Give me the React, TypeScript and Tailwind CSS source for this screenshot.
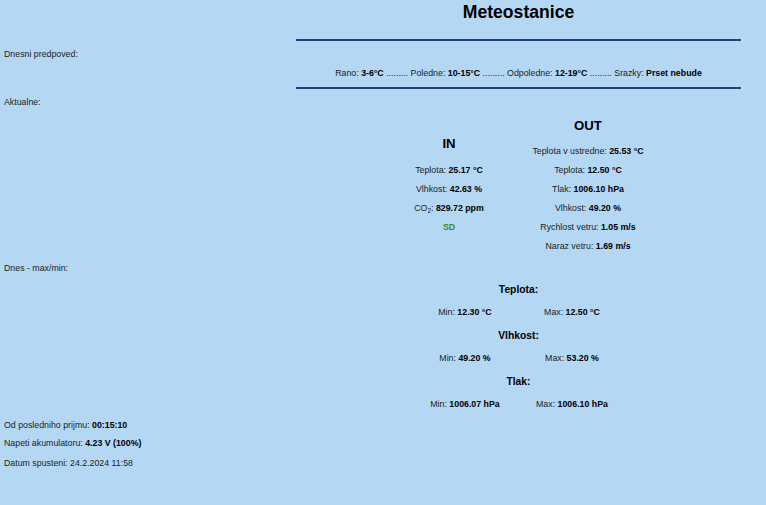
export default function App() {
  return (
    <div className="min-h-[505px] w-[766px] bg-[#b4d7f4] font-['Liberation_Sans',Arial,sans-serif] text-[8.8px] leading-[12px] text-[#222]">
      {/* header */}
      <Row>
        <div />
        <div>
          <h1 className="h-[39px] pt-[2px] text-center text-[17.6px] font-bold leading-[20px] text-black">
            Meteostanice
          </h1>
          <Rule />
        </div>
      </Row>

      {/* forecast */}
      <Row>
        <div className="mt-[7px]">Dnesni predpoved:</div>
        <div>
          <p className="mt-[26px] mb-[8px] text-center">
            Rano: <b className="text-black">3-6°C</b> ......... Poledne:{" "}
            <b className="text-black">10-15°C</b> ......... Odpoledne:{" "}
            <b className="text-black">12-19°C</b> ......... Srazky:{" "}
            <b className="text-black">Prset nebude</b>
          </p>
          <Rule />
        </div>
      </Row>

      {/* current */}
      <Row>
        <div className="mt-[7px]">Aktualne:</div>
        <div className="mt-[29px] grid grid-cols-[139px_139px] items-center justify-center text-center">
          <div>
            <h2 className="mb-[9px] text-[13.2px] font-bold leading-[16px] text-black">IN</h2>
            <Val label="Teplota" value="25.17 °C" />
            <Val label="Vlhkost" value="42.63 %" />
            <div className="h-[19px] leading-[19px]">
              CO<sub className="text-[6.5px]">2</sub>: <b className="text-black">829.72 ppm</b>
            </div>
            <div className="h-[19px] font-bold leading-[19px] text-[#3a8c1a]">SD</div>
          </div>
          <div>
            <h2 className="mb-[7.5px] text-[13.2px] font-bold leading-[16px] text-black">OUT</h2>
            <Val label="Teplota v ustredne" value="25.53 °C" />
            <Val label="Teplota" value="12.50 °C" />
            <Val label="Tlak" value="1006.10 hPa" />
            <Val label="Vlhkost" value="49.20 %" />
            <Val label="Rychlost vetru" value="1.05 m/s" />
            <Val label="Naraz vetru" value="1.69 m/s" />
          </div>
        </div>
      </Row>

      {/* min / max */}
      <Row>
        <div className="mt-[6px]">Dnes - max/min:</div>
        <div className="mt-[27px] text-center">
          <MinMax title="Teplota:" min="12.30 °C" max="12.50 °C" />
          <MinMax title="Vlhkost:" min="49.20 %" max="53.20 %" />
          <MinMax title="Tlak:" min="1006.07 hPa" max="1006.10 hPa" />
        </div>
      </Row>

      {/* status */}
      <div className="mt-[-2px] pl-1">
        <p>
          Od posledniho prijmu: <b className="text-black">00:15:10</b>
        </p>
        <p className="mt-[6px]">
          Napeti akumulatoru: <b className="text-black">4.23 V (100%)</b>
        </p>
        <p className="mt-[8px]">Datum spusteni: 24.2.2024 11:58</p>
      </div>
    </div>
  );
}

function Row({ children }: { children: React.ReactNode }) {
  const [left, right] = children as React.ReactNode[];
  return (
    <div className="flex items-start">
      <div className="w-[296px] shrink-0 pl-1">{left}</div>
      <div className="w-[445px] shrink-0">{right}</div>
    </div>
  );
}

function Rule() {
  return <div className="h-[2px] bg-[#2e3a86]" />;
}

function Val({ label, value }: { label: string; value: string }) {
  return (
    <div className="h-[19px] leading-[19px]">
      {label}: <b className="text-black">{value}</b>
    </div>
  );
}

function MinMax({ title, min, max }: { title: string; min: string; max: string }) {
  return (
    <div className="mb-[11px]">
      <h3 className="text-[10.3px] font-bold leading-[14px] text-black">{title}</h3>
      <div className="mt-[9px] grid grid-cols-[107px_107px] justify-center">
        <div>
          Min: <b className="text-black">{min}</b>
        </div>
        <div>
          Max: <b className="text-black">{max}</b>
        </div>
      </div>
    </div>
  );
}
